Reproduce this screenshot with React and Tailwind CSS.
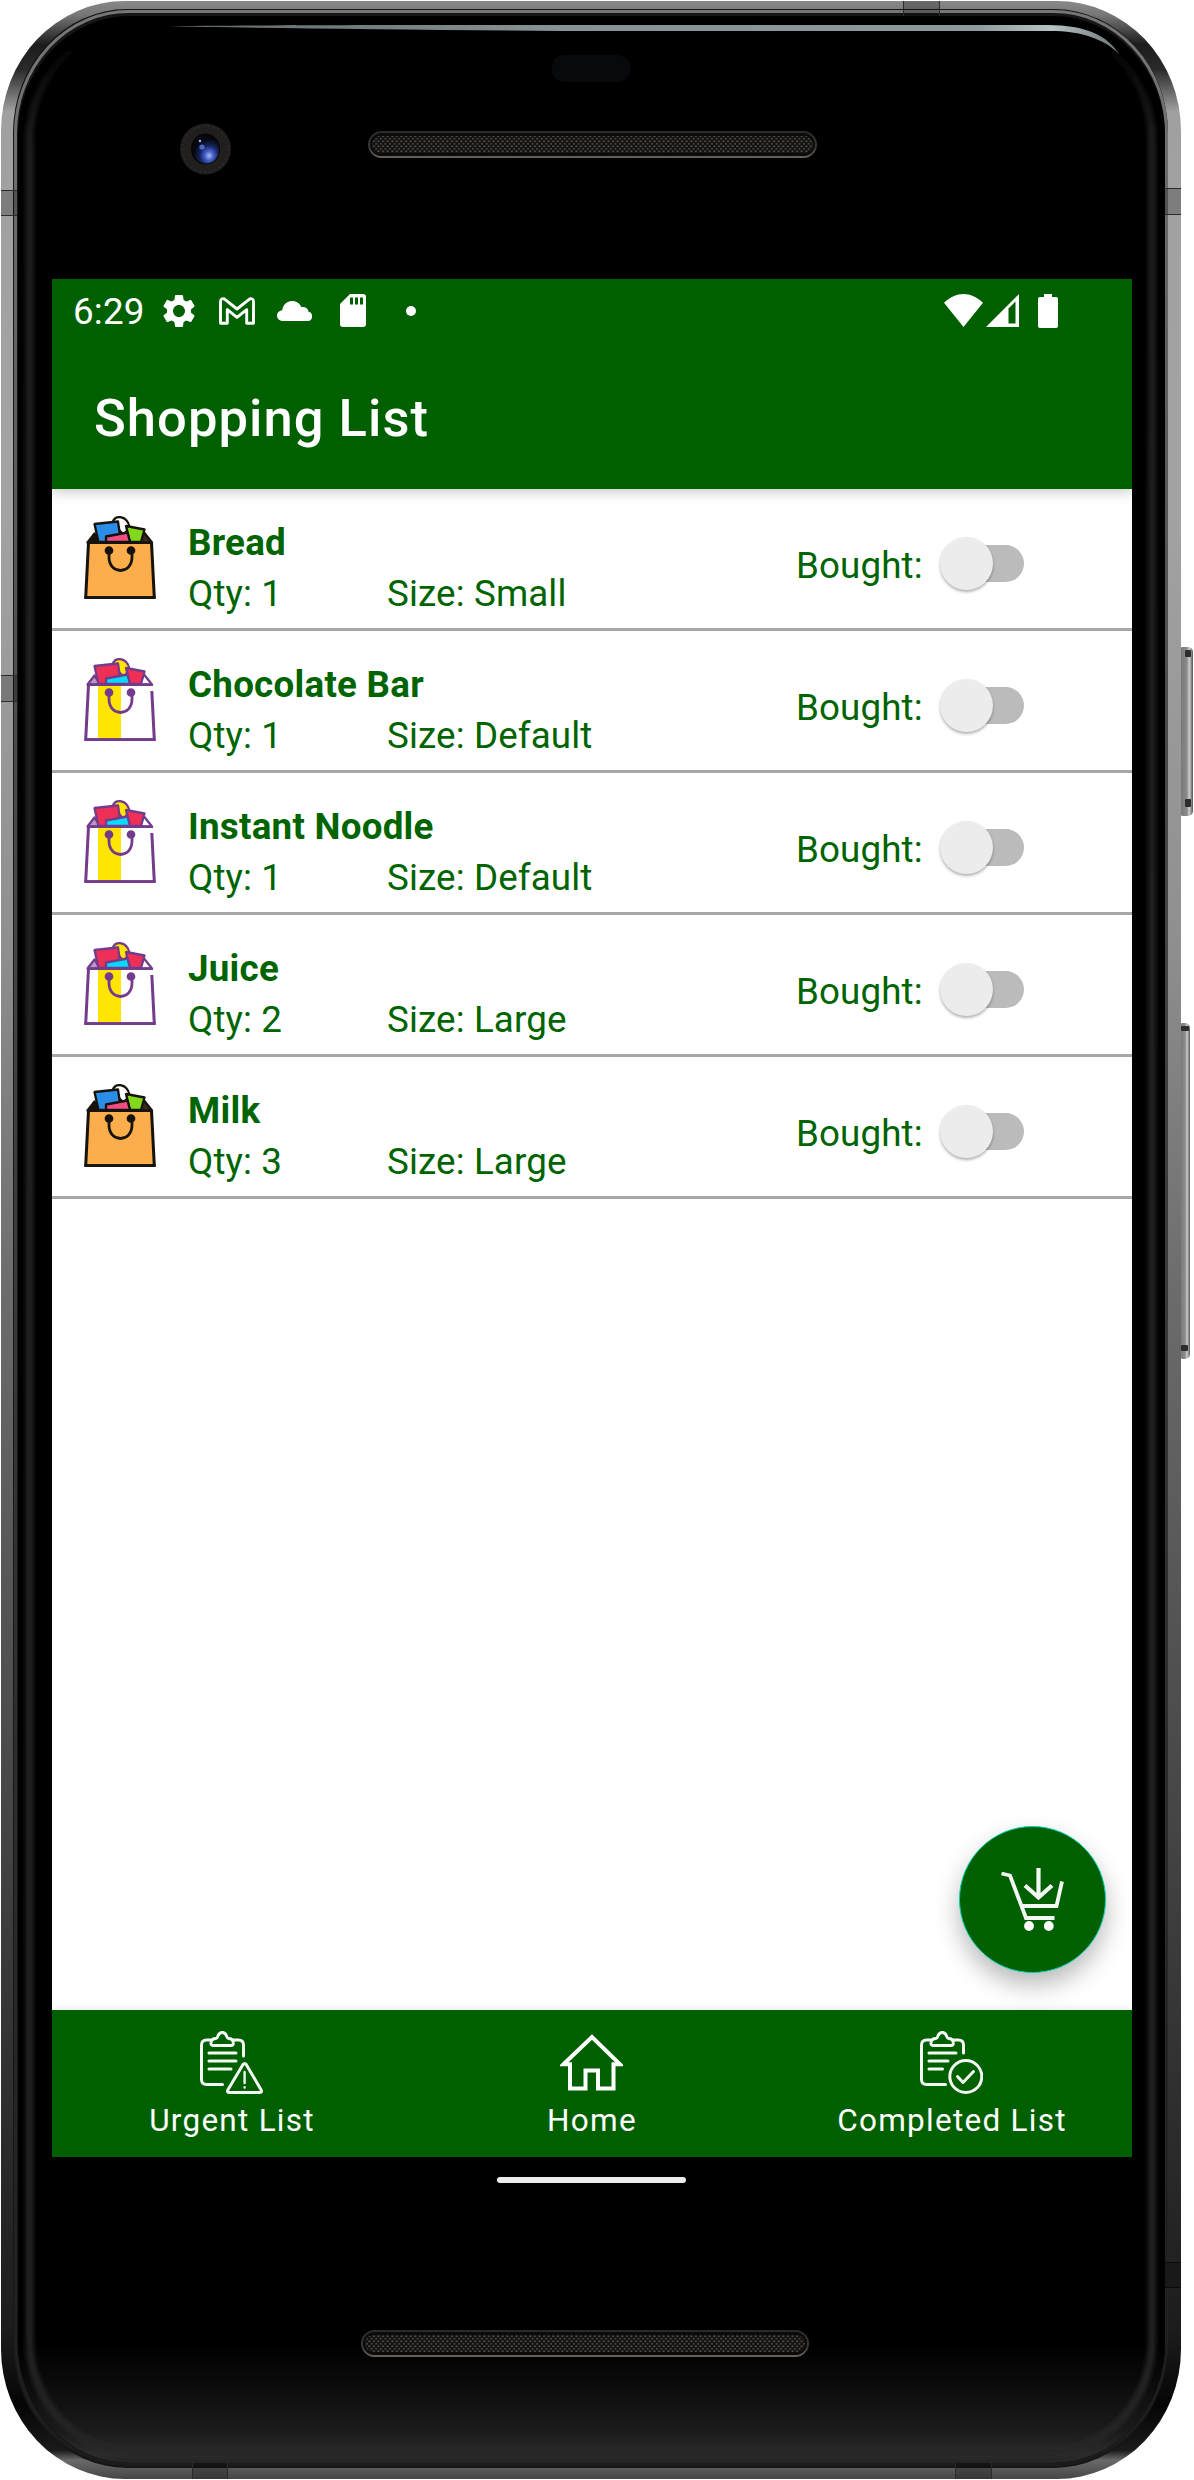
import React from "react";
import { MdSettings } from "react-icons/md";

const items = [
  { name: "Bread", qty: 1, size: "Small", bag: "orange" },
  { name: "Chocolate Bar", qty: 1, size: "Default", bag: "striped" },
  { name: "Instant Noodle", qty: 1, size: "Default", bag: "striped" },
  { name: "Juice", qty: 2, size: "Large", bag: "striped" },
  { name: "Milk", qty: 3, size: "Large", bag: "orange" },
];

function Speaker({ x, y, w }) {
  return (
    <g>
      <rect x={x + 1} y={y + 1} width={w - 2} height="25" rx="12.5" fill="#0c0b0b" stroke="url(#lip)" strokeWidth="2" />
      <rect x={x + 4} y={y + 5} width={w - 8} height="17" rx="8.5" fill="url(#mesh)" />
    </g>
  );
}

/* The handset body: metal rim, glass, camera, speakers and side keys. */
function PhoneFrame() {
  return (
    <svg className="absolute inset-0" width="1194" height="2480" viewBox="0 0 1194 2480" aria-hidden="true">
      <defs>
        <linearGradient id="rim" x1="0" y1="0" x2="0" y2="2480" gradientUnits="userSpaceOnUse">
          <stop offset="0" stopColor="#8a8a8a" />
          <stop offset="0.006" stopColor="#777" />
          <stop offset="0.018" stopColor="#1c1c1c" />
          <stop offset="0.028" stopColor="#2a2a2a" />
          <stop offset="0.045" stopColor="#a0a0a0" />
          <stop offset="0.2" stopColor="#a3a3a3" />
          <stop offset="0.38" stopColor="#8f8f8f" />
          <stop offset="0.52" stopColor="#6c6c6c" />
          <stop offset="0.74" stopColor="#444" />
          <stop offset="0.88" stopColor="#282828" />
          <stop offset="0.94" stopColor="#1c1c1c" />
          <stop offset="0.97" stopColor="#050505" />
          <stop offset="0.988" stopColor="#1a1a1a" />
          <stop offset="0.992" stopColor="#6a6a6a" />
          <stop offset="1" stopColor="#444" />
        </linearGradient>
        <linearGradient id="rimInner" x1="0" y1="0" x2="0" y2="2480" gradientUnits="userSpaceOnUse">
          <stop offset="0" stopColor="#777" />
          <stop offset="0.3" stopColor="#4a4a4a" />
          <stop offset="0.6" stopColor="#333" />
          <stop offset="1" stopColor="#1c1c1c" />
        </linearGradient>
        <linearGradient id="chin" x1="0" y1="0" x2="0" y2="1">
          <stop offset="0" stopColor="#000" />
          <stop offset="0.35" stopColor="#0c0c0c" />
          <stop offset="0.75" stopColor="#1c1c1c" />
          <stop offset="0.93" stopColor="#2c2c2c" />
          <stop offset="1" stopColor="#242424" />
        </linearGradient>
        <linearGradient id="sheen" x1="0" y1="0" x2="0" y2="2480" gradientUnits="userSpaceOnUse">
          <stop offset="0.015" stopColor="#242424" stopOpacity="0" />
          <stop offset="0.06" stopColor="#242424" />
          <stop offset="1" stopColor="#262626" />
        </linearGradient>
        <filter id="soft" x="-2%" y="-2%" width="104%" height="104%">
          <feGaussianBlur stdDeviation="2.6" />
        </filter>
        <linearGradient id="lip" x1="0" y1="0" x2="0" y2="1">
          <stop offset="0" stopColor="#2a2a2a" />
          <stop offset="0.7" stopColor="#3a3a3a" />
          <stop offset="1" stopColor="#66605c" />
        </linearGradient>
        <linearGradient id="key" x1="0" y1="0" x2="1" y2="0">
          <stop offset="0" stopColor="#6e6e6e" />
          <stop offset="0.6" stopColor="#8c8c8c" />
          <stop offset="0.75" stopColor="#cfcfcf" />
          <stop offset="1" stopColor="#555" />
        </linearGradient>
        <linearGradient id="gloss" x1="158" y1="0" x2="1119" y2="0" gradientUnits="userSpaceOnUse">
          <stop offset="0" stopColor="#5e6868" />
          <stop offset="0.4" stopColor="#879092" />
          <stop offset="0.85" stopColor="#8f999b" />
          <stop offset="0.93" stopColor="#b9c2c3" />
          <stop offset="1" stopColor="#6c7678" />
        </linearGradient>
        <radialGradient id="lens" cx="0.62" cy="0.72" r="0.6">
          <stop offset="0" stopColor="#a9baf5" />
          <stop offset="0.28" stopColor="#4560c8" />
          <stop offset="0.6" stopColor="#16235e" />
          <stop offset="1" stopColor="#05070f" />
        </radialGradient>
        <pattern id="mesh" width="4.6" height="5" patternUnits="userSpaceOnUse">
          <rect width="4.6" height="5" fill="#11100f" />
          <rect x="0.4" y="0.4" width="1.8" height="1.8" fill="#5a544c" />
          <rect x="2.7" y="2.9" width="1.8" height="1.8" fill="#4c4740" />
        </pattern>
        <clipPath id="glass">
          <rect x="18" y="16" width="1147" height="2447" rx="112" ry="120" />
        </clipPath>
      </defs>

      {/* side keys */}
      <rect x="1178" y="647" width="15" height="169" rx="5" fill="url(#key)" />
      <rect x="1185" y="650" width="6" height="7" rx="1" fill="#2c2c2c" />
      <rect x="1185" y="799" width="6" height="8" rx="1" fill="#2c2c2c" />
      <rect x="1178" y="1023" width="12" height="336" rx="5" fill="url(#key)" />
      <rect x="1181" y="1026" width="8" height="5" rx="1" fill="#2c2c2c" />
      <rect x="1181" y="1345" width="7" height="6" rx="1" fill="#2c2c2c" />

      {/* metal rim */}
      <rect x="1" y="1" width="1180" height="2478" rx="124" ry="130" fill="url(#rim)" />
      <rect x="13" y="9" width="1155" height="2459" rx="114" ry="124" fill="#161616" />
      <rect x="15.5" y="11.5" width="1151" height="2453" rx="113" ry="122" fill="none" stroke="url(#rimInner)" strokeWidth="3" />

      {/* antenna seams */}
      <g fill="#000" fillOpacity="0.22">
        <rect x="1" y="190" width="16" height="25" />
        <rect x="1" y="675" width="16" height="26" />
        <rect x="1165" y="189" width="16" height="25" />
        <rect x="1165" y="2262" width="16" height="26" />
        <rect x="903" y="1" width="36" height="15" />
        <rect x="192" y="2463" width="35" height="16" />
        <rect x="956" y="2463" width="35" height="16" />
      </g>
      <g stroke="#2b2b2b" strokeWidth="1">
        <path d="M1 190.500h16M1 215.500h16M1 675.500h16M1 701.500h16M1165 188.500h16M1165 214.500h16" />
        <path d="M1165 2262.500h16M1165 2287.500h16" stroke="#0a0a0a" />
        <path d="M903.500 1v15M939.500 1v15M192.500 2463v16M227.500 2463v16M955.500 2463v16M991.500 2463v16" />
      </g>

      {/* glass */}
      <g clipPath="url(#glass)">
        <rect x="18" y="16" width="1148" height="2448" fill="#000" />
        <rect x="18" y="2345" width="1148" height="118" fill="url(#chin)" />
        <rect x="29.500" y="28" width="1122.500" height="2424" rx="104" ry="112" fill="none" stroke="url(#sheen)" strokeWidth="7" filter="url(#soft)" />
      </g>
      <path
        d="M158 26.3 C260 25 400 25 560 25 H1048 C1086 25 1108 36 1119 54 C1104 39 1082 31 1050 31 H560 C400 29.5 260 28 158 26.3Z"
        fill="url(#gloss)"
      />

      {/* sensor, camera, speakers */}
      <rect x="552" y="55" width="78" height="27" rx="12" fill="#08090d" />
      <circle cx="205.5" cy="149" r="25.5" fill="#211e1e" />
      <circle cx="205.5" cy="149" r="23" fill="none" stroke="#2c2828" strokeWidth="2" strokeDasharray="2 3" />
      <ellipse cx="205.5" cy="149" rx="14.5" ry="15.5" fill="#060606" />
      <ellipse cx="206" cy="149.5" rx="13" ry="14" fill="url(#lens)" />
      <circle cx="202" cy="147" r="2.6" fill="#5f7ce0" fillOpacity="0.8" />
      <circle cx="200" cy="141" r="1.2" fill="#a9baf5" />
      <Speaker x={368} y={131} w={449} />
      <Speaker x={361} y={2330} w={448} />
    </svg>
  );
}

function GmailIcon() {
  return (
    <svg className="ml-5" width="36" height="28" viewBox="0 0 36 28" fill="none" stroke="#fff" strokeWidth="2.9" strokeLinejoin="round">
      <path d="M1.5 4.5C1.5 1.5 4.2 .8 6.2 2.6L18 12 29.8 2.6C31.8 .8 34.5 1.5 34.5 4.5V26.2H27.7V12.6L18 20.3 8.3 12.6V26.2H1.5Z" />
    </svg>
  );
}

function CloudIcon() {
  return (
    <svg className="ml-[22px]" width="36" height="20" viewBox="0 0 36 20" fill="#fff">
      <path d="M5.5 20A5.4 5.4 0 0 1 5.2 9.2C6 3.6 10 0 15 0c4.600 0 8 2.500 9.400 6.200 4-.600 6.700 1.600 7.200 4.600A4.700 4.700 0 0 1 31 20Z" />
    </svg>
  );
}

function SdCardIcon() {
  return (
    <svg className="ml-[27px]" width="26" height="33" viewBox="0 0 26 33">
      <path fill="#fff" d="M10 0H23a3 3 0 0 1 3 3V30a3 3 0 0 1-3 3H3a3 3 0 0 1-3-3V10Z" />
      <path fill="#006000" d="M10 3.500h3v7h-3zM15 3.500h3v7h-3zM20 3.500h3v7h-3z" />
    </svg>
  );
}

function StatusBar() {
  return (
    <div className="flex h-[63px] items-center pl-[21px] text-white">
      <span className="w-[73px] pt-0.5 text-[36.75px] leading-[43px] tracking-[0.2px]">6:29</span>
      <MdSettings className="ml-[13px] size-10" />
      <GmailIcon />
      <CloudIcon />
      <SdCardIcon />
      <span className="ml-10 size-2.5 rounded-full bg-white" />
      <svg className="mr-[3px] ml-auto" width="39" height="33" viewBox="0 0 39 33" fill="#fff">
        <path d="M0 8.800C12 -2.900 27 -2.900 39 8.800L19.500 33Z" />
      </svg>
      <svg className="mr-[19px]" width="33" height="33" viewBox="0 0 33 33">
        <path fill="#fff" d="M0 33L33 0V33Z" />
        <path fill="#006000" d="M22.500 14.500L29.500 7.500V29.500H22.500Z" />
      </svg>
      <svg className="mr-[74px]" width="20" height="34" viewBox="0 0 20 34" fill="#fff">
        <path d="M6 0h8v3h4a2 2 0 0 1 2 2v27a2 2 0 0 1-2 2H2a2 2 0 0 1-2-2V5a2 2 0 0 1 2-2h4z" />
      </svg>
    </div>
  );
}

function Bag({ kind }) {
  const orange = kind === "orange";
  const line = orange ? "#17120c" : "#733b8c";
  return (
    <svg className="mt-[26px] ml-8 shrink-0" width="72" height="84" viewBox="0 0 72 84" stroke={line} strokeWidth="2.300" strokeLinejoin="round">
      <path d="M29 8C29 -.500 43 -.500 45.500 12L40 20L34 14Z" fill={orange ? "#fff" : "#ffe500"} />
      <path d="M3.500 27.500L10.500 18.500L16 27.500Z" fill={orange ? "#17120c" : "#b79ac6"} />
      <path d="M60 17.500L68 27.500H55Z" fill={orange ? "#3b2a16" : "#fff"} />
      <path d="M10.500 9L34 6.500L37 27H14.500Z" fill={orange ? "#2a8de8" : "#ee3056"} />
      <path d="M42 11L60.500 14.500L57 27H46Z" fill={orange ? "#82d81a" : "#ee3056"} />
      <path d="M22 21.500L43.500 17.500L46 27H22Z" fill={orange ? "#f04e83" : "#00dcff"} />
      <path d="M4.500 27.700H68L71 82.500H1.300Z" fill={orange ? "#fbae4b" : "#fff"} stroke="none" />
      {!orange && <path d="M14 28H37V82H14Z" fill="#ffe500" stroke="none" />}
      <path d="M4.500 27.700L1.700 82.700H70.300L67.500 27.700" fill="none" strokeWidth="3" />
      <path d="M4 27.700H68" fill="none" strokeWidth="2.600" />
      <path d="M.500 82.600H71.500" strokeWidth="2.800" />
      {!orange && <path d="M67 29V34" stroke="#fff" strokeWidth="6" />}
      <path d="M25 36V42C25 60 48 60 48 42V36" fill="none" strokeWidth="2.800" />
      <circle cx="25" cy="35.500" r="3.200" fill={line} />
      <circle cx="47" cy="35.500" r="3.200" fill={line} />
    </svg>
  );
}

function Switch() {
  return (
    <div className="relative mt-[56px] ml-[19px] h-[37px] w-[83px]">
      <div className="ml-3 h-[37px] rounded-full bg-[#bbbbbb]" />
      <div className="absolute -top-2 -left-px size-[53px] rounded-full bg-[#ececec] shadow-[0_2px_3px_rgba(0,0,0,0.3)]" />
    </div>
  );
}

function ItemRow({ item }) {
  return (
    <li className="flex h-[142px] items-start border-b-[3px] border-[#a6a6a6] text-[36.75px] leading-[43px] tracking-[0.12px] whitespace-nowrap text-[#006400]">
      <Bag kind={item.bag} />
      <div className="mt-8 ml-8 w-[608px]">
        <p className="font-bold tracking-[0.25px]">{item.name}</p>
        <div className="mt-2 flex">
          <span className="w-[199px]">Qty: {item.qty}</span>
          <span>Size: {item.size}</span>
        </div>
      </div>
      <span className="mt-[55px] w-[126px]">Bought:</span>
      <Switch />
    </li>
  );
}

function Clipboard({ lines, board, children }) {
  return (
    <svg className="mr-0.5" width="63" height="63" viewBox="0 0 63 63" fill="none" stroke="#f4f8f4" strokeWidth="3" strokeLinecap="round" strokeLinejoin="round">
      <path d={board} />
      <path d="M13 14.500C11.500 14.500 10.700 13.500 11 11.500C11.300 8.500 13 7.500 16 7.500C17.500 7.500 17.500 5.500 18.500 3.800C20.300 .6 24.300 .6 26 3.800C27 5.500 27 7.500 28.500 7.500C31.500 7.500 33 8.500 33.300 11.500C33.600 13.500 32.700 14.500 31 14.500Z" />
      <path d={lines} />
      {children}
    </svg>
  );
}

function UrgentIcon() {
  return (
    <Clipboard
      lines="M9 22H36M9 30H36M9 38H31"
      board="M10.500 9H6.500Q1.500 9 1.500 14V48.500Q1.500 53.500 6.500 53.500H22.500M33.500 9H38.500Q43.500 9 43.500 14V25"
    >
      <path d="M43 33.500Q44.600 31.500 46.200 33.500L61.200 59Q62.200 61.500 59.500 61.500H29.500Q26.800 61.500 27.800 59Z" />
      <path d="M44.600 41V52M44.600 56.300V56.600" strokeWidth="2.400" />
    </Clipboard>
  );
}

function CompletedIcon() {
  return (
    <Clipboard
      lines="M9 22H36M9 30H28M9 38H22.500"
      board="M10.500 9H6.500Q1.500 9 1.500 14V48.500Q1.500 53.500 6.500 53.500H25.500M33.500 9H38.500Q43.500 9 43.500 14V22"
    >
      <circle cx="45.800" cy="45.500" r="16" />
      <path d="M37.500 45.500L43 51.500L53.500 40.500" />
    </Clipboard>
  );
}

function HomeIcon() {
  return (
    <svg className="mr-0.5" width="63" height="63" viewBox="0 0 63 63" fill="none" stroke="#fff" strokeWidth="4">
      <path d="M3.500 33.300L32 6L60 33.300H53.500V57.500H38V39.500H25.500V57.500H10V33.300Z" />
    </svg>
  );
}

function NavItem({ label, children }) {
  return (
    <div className="flex flex-1 flex-col items-center pt-[21px]">
      {children}
      <span className="mt-2 text-[31.5px] leading-[37px] tracking-[1.25px] text-white">{label}</span>
    </div>
  );
}

export default function App() {
  return (
    <div className="relative h-[2480px] w-[1194px] overflow-hidden bg-white font-[Roboto,sans-serif]">
      <PhoneFrame />
      <div className="relative pt-[279px] pl-[52px]">
        <main className="relative flex h-[1878px] w-[1080px] flex-col bg-white">
          <header className="relative h-[210px] shrink-0 bg-[#006000] shadow-[0_3px_12px_rgba(0,0,0,0.22)] [clip-path:inset(0_0_-20px_0)]">
            <StatusBar />
            <h1 className="mt-[45px] ml-[42px] text-[52.5px] leading-[62px] font-medium tracking-[1.05px] text-white">Shopping List</h1>
          </header>
          <ul className="flex-1">
            {items.map((item) => (
              <ItemRow key={item.name} item={item} />
            ))}
          </ul>
          <button className="absolute right-[26px] bottom-[184px] flex size-[147px] items-center justify-center rounded-full border border-[#03d0b8] bg-[#006000] shadow-[0_12px_24px_rgba(0,0,0,0.28)]">
            <svg width="63" height="63" viewBox="0 0 63 63" fill="none" stroke="#f4f8f4" strokeWidth="3.800">
              <path d="M.5 5.500L9 7.500L25 50H53.500M20 38H55.500L61 13.500" />
              <path d="M37.500 0V29M24 17.500L37.500 29.500L51 17.500" strokeWidth="4.200" />
              <circle cx="28" cy="58" r="4.900" fill="#fff" stroke="none" />
              <circle cx="47.800" cy="58" r="4.900" fill="#fff" stroke="none" />
            </svg>
          </button>
          <nav className="relative flex h-[147px] bg-[#006000] shadow-[0_-1px_8px_rgba(0,0,0,0.1)] [clip-path:inset(-12px_0_0_0)]">
            <NavItem label="Urgent List">
              <UrgentIcon />
            </NavItem>
            <NavItem label="Home">
              <HomeIcon />
            </NavItem>
            <NavItem label="Completed List">
              <CompletedIcon />
            </NavItem>
          </nav>
        </main>
        <div className="mt-5 ml-[445px] h-1.5 w-[189px] rounded-full bg-[#ececec]" />
      </div>
    </div>
  );
}
